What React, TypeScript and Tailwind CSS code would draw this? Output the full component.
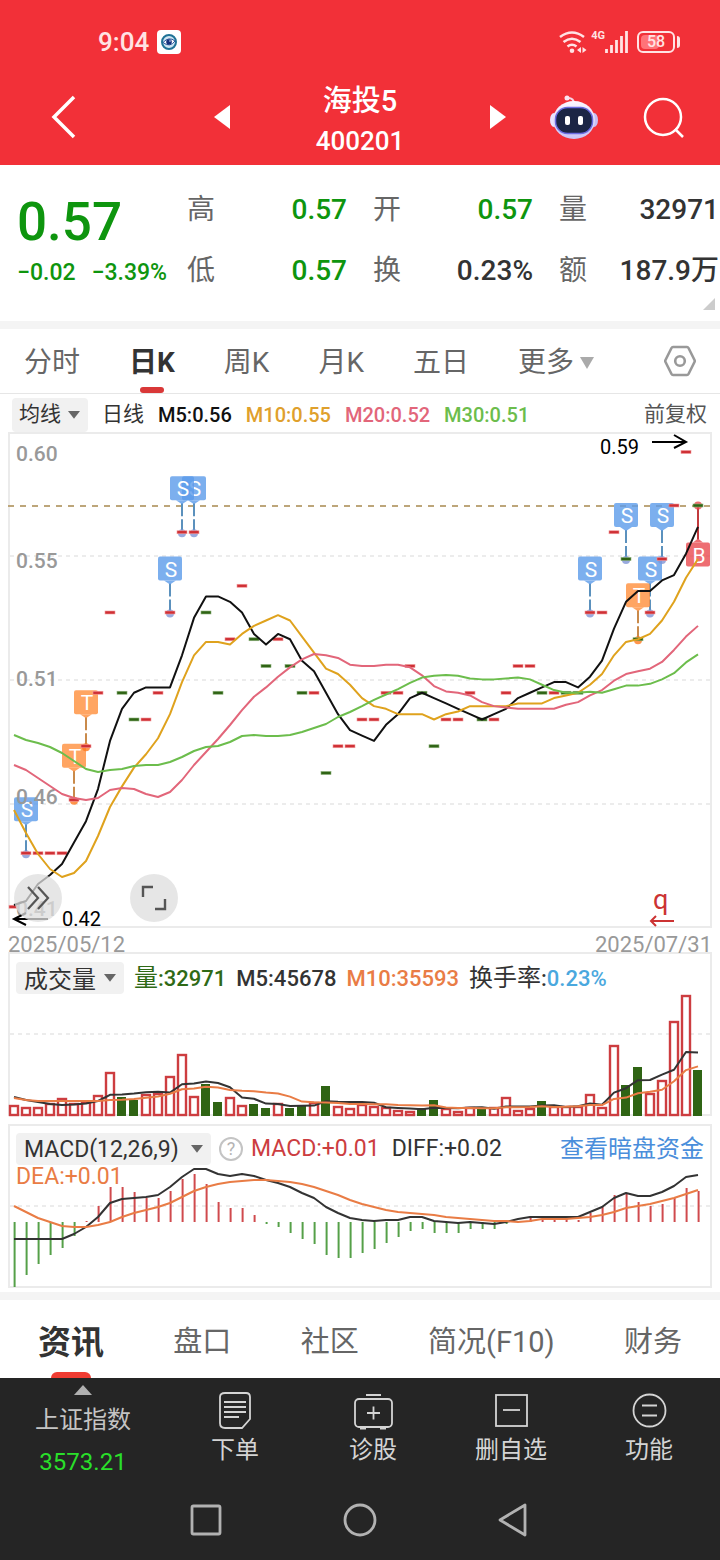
import React from "react";

const FONT = "font-[Roboto,'Noto_Sans_CJK_SC',sans-serif]";

/* The three panes share one coordinate sheet; each svg shows its own window of it. */
const xAt = (i: number) => 14 + 12 * i;
const yOfPrice = (cents: number) => 452 + (59 - cents) * 26.75;

// Closing prices in cents, one per trading day.
const closes = [
  42, 44, 44, 44, 44, 46, 48, 50, 53, 50, 49, 49, 50, 53, 56, 56, 53, 50, 52, 54, 52, 51, 52, 51, 50, 50, 47, 48, 48,
  49, 49, 50, 50, 51, 50, 48, 49, 49, 50, 49, 49, 50, 51, 51, 50, 50, 50, 50, 53, 53, 56, 55, 52, 53, 55, 57, 59, 57,
];
const fallingDays = new Set([9, 10, 16, 17, 20, 21, 23, 24, 26, 34, 35, 39, 44, 46, 47, 51, 52, 57]);

const closeYs = closes.map(yOfPrice);

// Top edge of every volume bar.
const volumeTops = [
  1106, 1108, 1108, 1104, 1099, 1104, 1102, 1096, 1073, 1097, 1100, 1095, 1094, 1077, 1055, 1097, 1084, 1102, 1098,
  1106, 1104, 1108, 1104, 1108, 1105, 1103, 1086, 1107, 1109, 1105, 1107, 1108, 1111, 1112, 1108, 1100, 1109, 1112,
  1108, 1107, 1108, 1098, 1111, 1109, 1101, 1107, 1107, 1107, 1095, 1108, 1046, 1085, 1067, 1094, 1081, 1022, 996, 1070,
];
const fallingVolume = new Set([9, 10, 16, 17, 20, 21, 23, 24, 26, 34, 35, 39, 44, 51, 52, 57]);

const macdEnds = [
  1287, 1275, 1264, 1255, 1248, 1236, 1221, 1206, 1187, 1187, 1192, 1198, 1198, 1191, 1179, 1174, 1184, 1202, 1208,
  1208, 1215, 1224, 1227, 1233, 1239, 1244, 1255, 1258, 1258, 1253, 1249, 1243, 1237, 1231, 1229, 1233, 1233, 1233,
  1229, 1229, 1229, 1224, 1222, 1218, 1219, 1219, 1219, 1220, 1213, 1207, 1195, 1193, 1202, 1206, 1204, 1198, 1188,
  1191,
];
const diffYs = [
  1239, 1239, 1239, 1239, 1239, 1234, 1227, 1217, 1203, 1199, 1198, 1197, 1195, 1187, 1177, 1169, 1169, 1174, 1176,
  1174, 1176, 1180, 1183, 1187, 1193, 1198, 1207, 1213, 1218, 1220, 1221, 1220, 1220, 1217, 1217, 1221, 1222, 1223,
  1222, 1223, 1224, 1222, 1219, 1217, 1217, 1217, 1217, 1217, 1212, 1207, 1198, 1193, 1196, 1196, 1192, 1186, 1177,
  1175,
];
const deaYs = [
  1206, 1212, 1218, 1222, 1226, 1227, 1227, 1225, 1222, 1217, 1213, 1210, 1207, 1203, 1197, 1191, 1187, 1184, 1182,
  1181, 1180, 1180, 1181, 1182, 1184, 1187, 1191, 1195, 1200, 1204, 1207, 1210, 1212, 1213, 1214, 1215, 1217, 1218,
  1219, 1220, 1221, 1221, 1222, 1221, 1219, 1219, 1219, 1218, 1217, 1215, 1212, 1208, 1206, 1204, 1201, 1198, 1194,
  1190,
];

// Moving average; the opening days depend on earlier history and are given.
function average(values: number[], days: number, opening: number[]) {
  return values.map((_, i) =>
    i < opening.length ? opening[i] : values.slice(i - days + 1, i + 1).reduce((a, b) => a + b, 0) / days,
  );
}

const ma5 = average(closeYs, 5, [905, 901, 884, 875]);
const ma10 = average(closeYs, 10, [810, 833, 854, 869, 877, 873, 861, 836, 807]);
const ma20 = average(
  closeYs,
  20,
  [765, 770, 778, 786, 794, 798, 800, 798, 790, 788, 789, 794, 797, 792, 780, 765, 752, 739, 725],
);
const ma30 = average(
  closeYs,
  30,
  [
    735, 740, 743, 747, 753, 761, 769, 772, 770, 769, 766, 765, 765, 762, 757, 751, 747, 746, 742, 736, 735, 736, 736,
    735, 732, 728, 724, 717, 712,
  ],
);
const vol5 = average(volumeTops, 5, [1097, 1100, 1102, 1104]);
const vol10 = average(volumeTops, 10, [1098, 1100, 1101, 1101, 1101, 1101, 1101, 1101, 1100]);

function Line({ ys, color, width = 2 }: { ys: number[]; color: string; width?: number }) {
  return (
    <polyline
      points={ys.map((y, i) => `${xAt(i)},${y}`).join(" ")}
      fill="none"
      stroke={color}
      strokeWidth={width}
      strokeLinejoin="round"
    />
  );
}

const tags: { day: number; kind: "S" | "T" | "B" }[] = [
  { day: 1, kind: "S" },
  { day: 5, kind: "T" },
  { day: 6, kind: "T" },
  { day: 13, kind: "S" },
  { day: 15, kind: "S" },
  { day: 14, kind: "S" },
  { day: 48, kind: "S" },
  { day: 51, kind: "S" },
  { day: 53, kind: "S" },
  { day: 54, kind: "S" },
  { day: 52, kind: "T" },
  { day: 57, kind: "B" },
];
const tagColors = {
  S: { box: "#5c9ceb", stem: "#5b91bd", dot: "#7f95d6" },
  T: { box: "#ff8f3c", stem: "#c98a4b", dot: "#ff7a1f" },
  B: { box: "#ea4a4f", stem: "#c23b3e", dot: "#ea4a4f" },
};

function Tag({ day, kind }: { day: number; kind: "S" | "T" | "B" }) {
  const x = xAt(day);
  const y = closeYs[day];
  const c = tagColors[kind];
  const below = kind === "B";
  const top = below ? y + 37 : y - 56;
  return (
    <g>
      {below ? (
        <line x1={x} x2={x} y1={y} y2={y + 34} stroke={c.stem} strokeWidth="2" />
      ) : (
        <line x1={x} x2={x} y1={y - 29} y2={y} stroke={c.stem} strokeWidth="2" strokeDasharray="13 3" />
      )}
      <circle cx={x} cy={y + (below ? 0 : 1)} r="4" fill={c.dot} opacity=".8" />
      <g opacity=".8">
        <rect x={x - 12} y={top} width="24" height="24" rx="2" fill={c.box} />
        <path d={below ? `M${x - 5} ${top}l5 -4l5 4z` : `M${x - 6} ${top + 24}l6 4l6 -4z`} fill={c.box} />
      </g>
      <text x={x + 1} y={top + 20} textAnchor="middle" fontSize="21" fill="#fff">
        {kind}
      </text>
    </g>
  );
}

const axisLabels = [
  { text: "0.60", y: 461 },
  { text: "0.55", y: 568 },
  { text: "0.51", y: 686 },
  { text: "0.46", y: 804 },
  { text: "0.41", y: 916 },
];

function PriceChart() {
  return (
    <svg viewBox="10 434 700 492" className="block w-full overflow-visible" role="img" aria-label="日K">
      <g stroke="#ececec" strokeWidth="2" strokeDasharray="4 4">
        <path d="M10 556H710M10 680H710M10 804H710" />
      </g>
      <path d="M8 506H711" stroke="#bda67a" strokeWidth="2" strokeDasharray="6 6" />
      {tags.map((t) => (
        <Tag key={t.day} {...t} />
      ))}
      {closeYs.map((y, i) => (
        <rect
          key={i}
          x={i === 0 ? 9 : xAt(i) - 5}
          y={y - 1.5}
          width={i === 0 ? 8 : 10}
          height="3"
          fill={fallingDays.has(i) ? "#2f6414" : "#cf3035"}
          stroke={fallingDays.has(i) ? "#8bb079" : "#f29a9c"}
          strokeWidth=".6"
        />
      ))}
      <g fontSize="21" fill="#999" fontWeight="500">
        {axisLabels.map((l) => (
          <text key={l.text} x="16" y={l.y}>
            {l.text}
          </text>
        ))}
      </g>
      <Line ys={ma5} color="#111" />
      <Line ys={ma10} color="#dfa21d" />
      <Line ys={ma20} color="#e2667a" />
      <Line ys={ma30} color="#6cbd4c" />
      <g fontSize="20" fill="#000">
        <text x="600" y="454">
          0.59
        </text>
        <text x="62" y="926">
          0.42
        </text>
      </g>
      <g fill="none" stroke="#000" strokeWidth="2">
        <path d="M652 442H686M674 435L686 442L674 448" />
        <path d="M48 919H14M26 913L14 919L26 925" />
      </g>
      <text x="653" y="909" fontSize="27" fill="#cc3333">
        q
      </text>
      <path d="M674 921H651M656 916L651 921L656 926" fill="none" stroke="#cc3333" strokeWidth="2" />
    </svg>
  );
}

function VolumeChart() {
  return (
    <svg viewBox="10 994 700 120" className="block w-full overflow-visible" role="img" aria-label="成交量">
      <path d="M10 1034H710" stroke="#ececec" strokeWidth="2" strokeDasharray="4 4" />
      {volumeTops.map((top, i) =>
        fallingVolume.has(i) ? (
          <rect key={i} x={xAt(i) - 5} y={top} width="9" height={1116 - top} fill="#2f6414" />
        ) : (
          <rect
            key={i}
            x={xAt(i) - 4}
            y={top}
            width="8"
            height={1115 - top}
            fill="#fff"
            stroke="#cd3d40"
            strokeWidth="2.400"
          />
        ),
      )}
      <Line ys={vol5} color="#333" />
      <Line ys={vol10} color="#e97c45" />
    </svg>
  );
}

function MacdChart() {
  return (
    <svg viewBox="10 1164 700 122" className="block w-full overflow-visible" role="img" aria-label="MACD">
      <path d="M10 1206H710" stroke="#ececec" strokeWidth="2" strokeDasharray="4 4" />
      {macdEnds.map((end, i) => (
        <line
          key={i}
          x1={xAt(i) + 0.6}
          x2={xAt(i) + 0.6}
          y1="1222"
          y2={end}
          stroke={end > 1222 ? "#55a048" : "#d04a4d"}
          strokeWidth="2"
        />
      ))}
      <Line ys={diffYs} color="#333" />
      <Line ys={deaYs} color="#e97c45" />
    </svg>
  );
}

function Caret({ className }: { className: string }) {
  return (
    <svg viewBox="0 0 14 9" className={className} aria-hidden="true">
      <path d="M0 0H14L7 9Z" fill="currentColor" />
    </svg>
  );
}

function Picker({ label, value, className }: { label: string; value: string; className: string }) {
  return (
    <label className="relative flex shrink-0 items-center">
      <select
        aria-label={label}
        className={`appearance-none rounded bg-[#f1f1f1] text-[#333] outline-none ${className}`}
        defaultValue={value}
      >
        <option>{value}</option>
      </select>
      <Caret className="pointer-events-none absolute right-2 w-3 text-[#666]" />
    </label>
  );
}

function StatusBar() {
  return (
    <div className="flex h-20 items-center pl-[98px] pr-10 pt-1 text-[#ffe3e4]">
      <span className="text-[26px] font-medium leading-none">9:04</span>
      <svg viewBox="0 0 24 24" className="ml-2 size-6" aria-hidden="true">
        <rect width="24" height="24" rx="4" fill="#fff" />
        <circle cx="12" cy="12" r="7" fill="#cfe6f2" stroke="#1f7296" strokeWidth="2" />
        <path d="M6 12.500Q12 6 18 11Q13 18 6 12.500Z" fill="#fff" stroke="#27549c" strokeWidth="1" />
        <circle cx="12" cy="12" r="2.800" fill="#16307a" />
        <circle cx="13" cy="11" r=".8" fill="#d6e8ff" />
      </svg>
      <svg viewBox="560 28 28 26" className="ml-auto h-[26px] w-7" aria-hidden="true">
        <g fill="none" stroke="currentColor" strokeWidth="2.600">
          <path d="M561 36Q573 27 585 36" />
          <path d="M564.500 41Q573 34.500 581.500 41" />
          <path d="M568.500 45.500Q573 42 577.500 45.500" />
        </g>
        <circle cx="573" cy="49.700" r="2.300" fill="currentColor" />
        <path d="M582 46V52L578 49ZM583.500 46V52L587.500 49Z" fill="currentColor" />
      </svg>
      <span className="ml-1 self-start pt-6 text-[11px] font-bold leading-4">4G</span>
      <svg viewBox="605 30 24 22" className="h-[22px] w-6" aria-hidden="true">
        <path
          d="M606.500 48V52M611.500 44V52M616.500 39V52M621.500 35V52M626.500 30V52"
          stroke="currentColor"
          strokeWidth="2.800"
          fill="none"
        />
      </svg>
      <span className="relative ml-2 flex h-[22px] w-[38px] items-center justify-center rounded-md border-2 border-current">
        <span className="absolute inset-y-[2px] left-[2px] w-[18px] rounded-sm bg-[#ff7378]" />
        <span className="relative text-[16px] font-medium leading-none">58</span>
      </span>
      <span className="ml-[2px] h-3 w-[3px] rounded-r bg-current" />
    </div>
  );
}

function Robot() {
  return (
    <svg viewBox="550 92 48 46" className="h-[46px] w-12" aria-hidden="true">
      <defs>
        <linearGradient id="shell" x1="0" y1="0" x2="0" y2="1">
          <stop offset="0" stopColor="#fdf6ff" />
          <stop offset="1" stopColor="#c9c4f6" />
        </linearGradient>
      </defs>
      <path d="M574 102Q574 96 568 96" fill="none" stroke="#f7d5e6" strokeWidth="2" />
      <circle cx="567" cy="96" r="2.500" fill="#fbe3ef" />
      <ellipse cx="554" cy="118" rx="4" ry="7" fill="#e9e3ff" />
      <ellipse cx="594" cy="118" rx="4" ry="7" fill="#c7c0f5" />
      <ellipse cx="574" cy="118" rx="21" ry="19" fill="url(#shell)" />
      <rect x="555.500" y="105.500" width="37" height="26" rx="12" fill="#1b2545" stroke="#6b6be0" strokeWidth="1.500" />
      <rect x="565" y="114" width="5" height="9" rx="2" fill="#fff" />
      <rect x="578" y="114" width="5" height="9" rx="2" fill="#fff" />
    </svg>
  );
}

function Header() {
  return (
    <header className="bg-[#f23038] text-white">
      <StatusBar />
      <div className="grid h-[85px] grid-cols-[1fr_320px_1fr]">
        <div className="flex items-center pb-3 pl-[51px]">
          <button type="button" aria-label="返回">
            <svg viewBox="0 0 26 44" className="h-11 w-[26px]">
              <path d="M23 2L3 22L23 42" fill="none" stroke="currentColor" strokeWidth="3.500" />
            </svg>
          </button>
        </div>
        <div className="flex items-center justify-between px-[14px] pb-1">
          <button type="button" aria-label="上一只" className="pb-2">
            <svg viewBox="0 0 16 24" className="h-6 w-4">
              <path d="M16 0V24L0 12Z" fill="currentColor" />
            </svg>
          </button>
          <h1 className="text-center font-medium">
            <span className="block text-[29px] leading-[40px]">海投5</span>
            <span className="block text-[26px] leading-[40px]">400201</span>
          </h1>
          <button type="button" aria-label="下一只" className="pb-2">
            <svg viewBox="0 0 16 24" className="h-6 w-4">
              <path d="M0 0V24L16 12Z" fill="currentColor" />
            </svg>
          </button>
        </div>
        <div className="flex items-center justify-between pb-3 pl-[30px] pr-[35px]">
          <button type="button" aria-label="助手">
            <Robot />
          </button>
          <button type="button" aria-label="搜索">
            <svg viewBox="0 0 42 42" className="size-[42px]">
              <circle cx="20" cy="21" r="18" fill="none" stroke="currentColor" strokeWidth="2.500" />
              <path d="M32 33L40 41" stroke="currentColor" strokeWidth="2.500" />
            </svg>
          </button>
        </div>
      </div>
    </header>
  );
}

const quote = [
  { label: "高", value: "0.57", color: "text-[#0e950e]" },
  { label: "开", value: "0.57", color: "text-[#0e950e]" },
  { label: "量", value: "32971", color: "text-[#333]" },
  { label: "低", value: "0.57", color: "text-[#0e950e]" },
  { label: "换", value: "0.23%", color: "text-[#333]" },
  { label: "额", value: "187.9万", color: "text-[#333]" },
];

function Quote() {
  return (
    <section className="relative flex h-[156px]">
      <div className="w-[187px] shrink-0 pl-[17px] pt-[29px] font-medium text-[#0e950e]">
        <div className="text-[53px] leading-[56px]">0.57</div>
        <div className="flex gap-4 whitespace-nowrap pt-2 text-[23px] leading-[30px]">
          <span>−0.02</span>
          <span>−3.39%</span>
        </div>
      </div>
      <dl className="grid flex-1 auto-rows-[61px] grid-cols-3 gap-x-[26px] pr-[1px] pt-[14px] text-[28px]">
        {quote.map((q) => (
          <div key={q.label} className="flex items-center justify-between whitespace-nowrap">
            <dt className="text-[#666]">{q.label}</dt>
            <dd className={`font-medium ${q.color}`}>{q.value}</dd>
          </div>
        ))}
      </dl>
      <svg viewBox="0 0 12 12" className="absolute bottom-[11px] right-[5px] size-3" aria-hidden="true">
        <path d="M12 0V12H0Z" fill="#ccc" />
      </svg>
    </section>
  );
}

const periods = ["分时", "日K", "周K", "月K", "五日"];

function PeriodTabs() {
  return (
    <nav className="flex h-[65px] items-center gap-[49px] border-b border-[#e6e6e6] pl-6 pr-6 text-[28px] text-[#666]">
      {periods.map((p) =>
        p === "日K" ? (
          <button key={p} type="button" className="relative h-full pt-1 font-bold text-[#333]">
            {p}
            <span className="absolute bottom-0 left-1/2 h-[6px] w-6 -translate-x-1/2 rounded-full bg-[#d93838]" />
          </button>
        ) : (
          <button key={p} type="button" className="pt-1">
            {p}
          </button>
        ),
      )}
      <button type="button" className="flex items-center gap-[6px] whitespace-nowrap pt-1">
        更多
        <svg viewBox="0 0 14 12" className="h-3 w-[14px] text-[#aaa]" aria-hidden="true">
          <path d="M0 0H14L7 12Z" fill="currentColor" />
        </svg>
      </button>
      <button type="button" aria-label="设置" className="ml-auto shrink-0">
        <svg viewBox="0 0 32 32" className="size-8">
          <g fill="none" stroke="#999" strokeWidth="2.600" strokeLinejoin="round">
            <path d="M9 2H23Q24 2 24.500 3L30.500 15Q31 16 30.500 17L24.500 29Q24 30 23 30H9Q8 30 7.500 29L1.500 17Q1 16 1.500 15L7.500 3Q8 2 9 2Z" />
            <circle cx="16" cy="16" r="4.800" />
          </g>
        </svg>
      </button>
    </nav>
  );
}

function PriceSection() {
  return (
    <section>
      <div className="flex h-[38px] items-center gap-[14px] whitespace-nowrap pl-3 pr-[13px] pt-1 text-[20px] font-medium">
        <div className="font-normal">
          <Picker label="均线" value="均线" className="h-[34px] w-[76px] pl-[7px] text-[21px]" />
        </div>
        <span className="text-[21px] font-normal text-[#333]">日线</span>
        <span className="text-[#111]">M5:0.56</span>
        <span className="text-[#dfa02c]">M10:0.55</span>
        <span className="text-[#e2667a]">M20:0.52</span>
        <span className="text-[#6cbd4c]">M30:0.51</span>
        <button type="button" className="ml-auto text-[21px] font-normal text-[#555]">
          前复权
        </button>
      </div>
      <div className="relative mx-2 border-2 border-[#ebebeb]">
        <PriceChart />
        <button
          type="button"
          aria-label="展开"
          className="absolute bottom-1 left-1 flex size-12 items-center justify-center rounded-full bg-[#dedede]/75"
        >
          <svg viewBox="0 0 24 24" className="size-6">
            <path d="M2 1L12 12L2 23M12 1L22 12L12 23" fill="none" stroke="#555" strokeWidth="2.200" />
          </svg>
        </button>
        <button
          type="button"
          aria-label="全屏"
          className="absolute bottom-1 left-[120px] flex size-12 items-center justify-center rounded-full bg-[#dedede]/75"
        >
          <svg viewBox="0 0 26 26" className="size-[26px]">
            <path d="M2 12V2H12M24 14V24H14" fill="none" stroke="#555" strokeWidth="2.400" />
          </svg>
        </button>
      </div>
      <div className="flex h-6 items-center justify-between px-2 pt-[10px] text-[22px] leading-none text-[#999]">
        <span>2025/05/12</span>
        <span>2025/07/31</span>
      </div>
    </section>
  );
}

function VolumeSection() {
  return (
    <section className="mx-2 border-2 border-[#ebebeb]">
      <div className="flex h-10 items-center gap-[10px] whitespace-nowrap pl-[6px] pt-2 text-[22px] font-medium text-[#333]">
        <div className="font-normal">
          <Picker label="成交量" value="成交量" className="h-8 w-[108px] pb-[3px] pl-2 text-[24px]" />
        </div>
        <span className="text-[#2f6a16]">
          <span className="text-[24px] font-normal">量</span>:32971
        </span>
        <span>M5:45678</span>
        <span className="text-[#e97c45]">M10:35593</span>
        <span>
          <span className="text-[24px] font-normal">换手率</span>:<span className="text-[#4aa8de]">0.23%</span>
        </span>
      </div>
      <VolumeChart />
    </section>
  );
}

function MacdSection() {
  return (
    <section className="mx-2 mt-2 border-2 border-[#ebebeb]">
      <div className="flex h-[38px] items-center whitespace-nowrap pl-[6px] pr-[6px] pt-2 text-[23px] text-[#333]">
        <Picker label="MACD(12,26,9)" value="MACD(12,26,9)" className="h-8 w-[195px] pb-[3px] pl-2 text-[23px]" />
        <button
          type="button"
          aria-label="说明"
          className="ml-2 mr-2 size-6 shrink-0 rounded-full border-2 border-[#c4c4c4] text-[18px] leading-5 text-[#b4b4b4]"
        >
          ?
        </button>
        <span className="mr-3 text-[#cc3d40]">MACD:+0.01</span>
        <span>DIFF:+0.02</span>
        <a href="#funds" className="ml-auto text-[24px] text-[#4a8edb]">
          查看暗盘资金
        </a>
      </div>
      <div className="relative">
        <MacdChart />
        <span className="absolute left-[6px] top-0 text-[23px] leading-[26px] text-[#e97c45]">DEA:+0.01</span>
      </div>
    </section>
  );
}

const infoTabs = ["资讯", "盘口", "社区", "简况(F10)", "财务"];

function InfoTabs() {
  return (
    <nav className="flex h-[78px] items-center justify-between whitespace-nowrap px-[38px] pt-2 text-[29px] text-[#666]">
      {infoTabs.map((t, i) =>
        i === 0 ? (
          <button key={t} type="button" className="relative h-full text-[33px] font-bold text-[#333]">
            {t}
            <span className="absolute bottom-0 left-1/2 h-[6px] w-10 -translate-x-1/2 rounded-t-md bg-[#f03c32]" />
          </button>
        ) : (
          <button key={t} type="button">
            {t}
          </button>
        ),
      )}
    </nav>
  );
}

const actions = [
  {
    label: "下单",
    icon: (
      <>
        <path d="M8 2H29Q33 2 33 6V28L25 37H8Q3 37 3 32V6Q3 2 8 2Z" />
        <path d="M7 11H29M7 16H29M7 21H29M7 26H22" />
      </>
    ),
  },
  {
    label: "诊股",
    icon: (
      <>
        <rect x="0" y="8" width="37" height="28" rx="4" />
        <path d="M11 4H26M12 22H25M18.500 15.500V28.500" />
        <path d="M5 37.500H11M25 37.500H31" />
      </>
    ),
  },
  {
    label: "删自选",
    icon: (
      <>
        <rect x="3" y="4" width="31" height="31" />
        <path d="M10 19H27" />
      </>
    ),
  },
  {
    label: "功能",
    icon: (
      <>
        <circle cx="18.500" cy="19.500" r="16" />
        <path d="M11 14.500H26M11 24.500H26" />
      </>
    ),
  },
];

function BottomBar() {
  return (
    <footer className="bg-[#252525] text-[24px] text-[#c4c4c4]">
      <div className="flex h-[102px] pr-[2px]">
        <button type="button" className="flex w-[166px] flex-col items-center pt-[7px]">
          <svg viewBox="0 0 18 10" className="h-[10px] w-[18px]" aria-hidden="true">
            <path d="M9 0L18 10H0Z" fill="#b0b0b0" />
          </svg>
          <span className="pt-2 leading-[34px]">上证指数</span>
          <span className="pt-2 leading-[34px] text-[#2adf2a]">3573.21</span>
        </button>
        {actions.map((a) => (
          <button key={a.label} type="button" className="flex flex-1 flex-col items-center pt-[13px]">
            <svg
              viewBox="-1 0 39 40"
              className="h-10 w-[39px] overflow-visible"
              fill="none"
              stroke="#d4d4d4"
              strokeWidth="1.800"
              aria-hidden="true"
            >
              {a.icon}
            </svg>
            <span className="pt-[2px] leading-[34px] text-[#d4d4d4]">{a.label}</span>
          </button>
        ))}
      </div>
      <div className="flex h-20 items-center justify-center gap-[121px]">
        <button type="button" aria-label="最近任务">
          <svg viewBox="0 0 32 32" className="size-8">
            <rect x="2" y="2" width="28" height="28" rx="1.500" fill="none" stroke="#b2b2b2" strokeWidth="2.800" />
          </svg>
        </button>
        <button type="button" aria-label="主屏幕">
          <svg viewBox="0 0 34 34" className="size-[34px]">
            <circle cx="17" cy="17" r="15" fill="none" stroke="#b2b2b2" strokeWidth="2.800" />
          </svg>
        </button>
        <button type="button" aria-label="后退">
          <svg viewBox="0 0 32 34" className="h-[34px] w-8">
            <path
              d="M27 2V32L2 17Z"
              fill="none"
              stroke="#b2b2b2"
              strokeWidth="2.800"
              strokeLinejoin="round"
            />
          </svg>
        </button>
      </div>
    </footer>
  );
}

export default function App() {
  return (
    <div lang="zh-CN" className={`min-h-screen bg-white ${FONT}`}>
      <Header />
      <Quote />
      <div className="h-2 bg-[#f4f4f4]" />
      <main>
        <PeriodTabs />
        <PriceSection />
        <VolumeSection />
        <MacdSection />
      </main>
      <div className="mt-1 h-2 bg-[#f4f4f4]" />
      <InfoTabs />
      <BottomBar />
    </div>
  );
}
